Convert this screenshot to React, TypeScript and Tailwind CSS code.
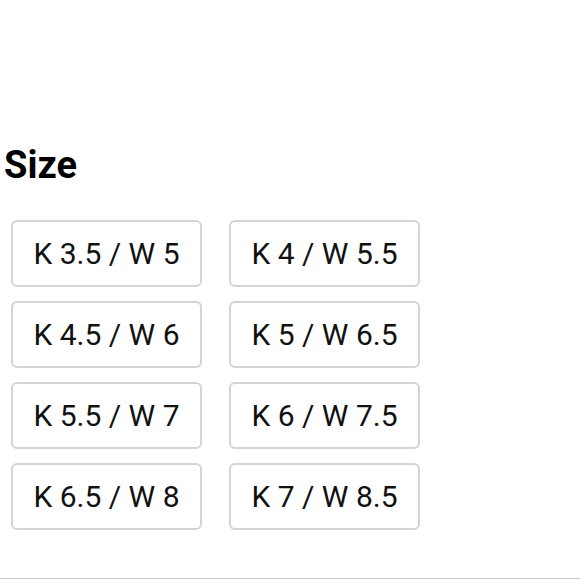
const sizes = [
  'K 3.5 / W 5',
  'K 4 / W 5.5',
  'K 4.5 / W 6',
  'K 5 / W 6.5',
  'K 5.5 / W 7',
  'K 6 / W 7.5',
  'K 6.5 / W 8',
  'K 7 / W 8.5',
];

export default function App() {
  return (
    <div
      className="h-[579px] w-[580px] bg-white border-b border-[#c8c8c8] pt-[146px]"
      style={{ fontFamily: 'Roboto, "Liberation Sans", sans-serif' }}
    >
      {/* Heading */}
      <h2 className="pl-[4px] text-[38px] leading-none font-bold text-black">Size</h2>

      {/* Size options */}
      <div className="mt-[36px] ml-[11px] grid grid-cols-[191px_191px] gap-x-[27px] gap-y-[14px]">
        {sizes.map((s) => (
          <button
            key={s}
            className="h-[67px] flex items-center justify-center rounded-[6px] border-2 border-[#d4d4d4] bg-white text-[30px] text-[#111]"
          >
            {s}
          </button>
        ))}
      </div>
    </div>
  );
}
